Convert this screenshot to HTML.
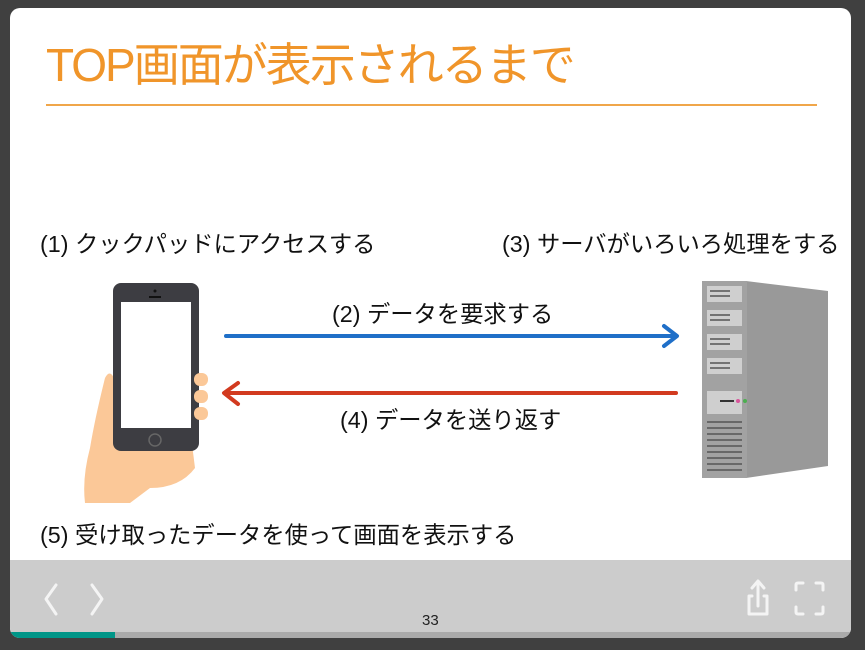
<!DOCTYPE html>
<html><head><meta charset="utf-8"><style>
*{margin:0;padding:0;box-sizing:border-box}
body{width:865px;height:650px;background:#404040;position:relative;overflow:hidden;font-family:"Liberation Sans","Noto Sans CJK JP",sans-serif}
#card{position:absolute;left:10px;top:8px;width:841px;height:630px;background:#fff;border-radius:10px;overflow:hidden}
.t{position:absolute;font-size:23.3px;color:#111;white-space:nowrap;line-height:1}
#bar{position:absolute;left:0;top:552px;width:841px;height:72px;background:#cccccc}
#prog{position:absolute;left:0;top:624px;width:841px;height:6px;background:#aaa}
#prog div{width:105px;height:6px;background:#009688}
</style></head><body>
<div id="card">
<div style="position:absolute;left:36px;top:34px;font-size:46px;color:#f0952a;letter-spacing:-2px;line-height:1">TOP画面が表示されるまで</div>
<div style="position:absolute;left:36px;top:96px;width:771px;height:2px;background:#f0a64a"></div>
<div class="t" style="left:30px;top:225px">(1) クックパッドにアクセスする</div>
<div class="t" style="left:492px;top:225px">(3) サーバがいろいろ処理をする</div>
<div class="t" style="left:322px;top:295px">(2) データを要求する</div>
<div class="t" style="left:330px;top:401px">(4) データを送り返す</div>
<div class="t" style="left:30px;top:516px">(5) 受け取ったデータを使って画面を表示する</div>
<svg style="position:absolute;left:0;top:0" width="841" height="552">
<g fill="none" stroke-linecap="round" stroke-linejoin="round" stroke-width="4">
<path d="M216 328 L666 328 M654 318 L667 328 L654 338" stroke="#1f6fc8"/>
<path d="M666 385 L216 385 M228 375 L214 385 L228 396" stroke="#d23a1f"/>
</g>
<path d="M95 370 Q100 360 105 372 L108 420 L180 420 L185 460 Q170 480 140 480 L120 495 L75 495 Q72 470 80 440 Q85 410 95 370Z" fill="#fbc898"/>
<rect x="103" y="275" width="86" height="168" rx="8" fill="#3d3d42"/>
<rect x="111" y="294" width="70" height="126" fill="#fff"/>
<circle cx="145" cy="432" r="6" fill="none" stroke="#666" stroke-width="1.5"/>
<rect x="139" y="288" width="12" height="2" fill="#111"/>
<circle cx="145" cy="283" r="1.5" fill="#111"/>
<rect x="184" y="365" width="14" height="13" rx="6" fill="#fbc898"/>
<rect x="184" y="382" width="14" height="13" rx="6" fill="#fbc898"/>
<rect x="184" y="399" width="14" height="13" rx="6" fill="#fbc898"/>
<path d="M736 273 L818 283 L818 458 L736 470Z" fill="#999"/>
<rect x="692" y="273" width="45" height="197" fill="#a2a2a2"/>
<g fill="#cfcfcf">
<rect x="697" y="278" width="35" height="16"/><rect x="697" y="302" width="35" height="16"/><rect x="697" y="326" width="35" height="16"/><rect x="697" y="350" width="35" height="16"/><rect x="697" y="383" width="35" height="23"/>
</g>
<g stroke="#555" stroke-width="1.5">
<path d="M700 283h20M700 288h20M700 307h20M700 312h20M700 331h20M700 336h20M700 355h20M700 360h20"/>
<path d="M697 414h35M697 420h35M697 426h35M697 432h35M697 438h35M697 444h35M697 450h35M697 456h35M697 462h35"/>
</g>
<rect x="710" y="392" width="14" height="2" fill="#333"/>
<circle cx="728" cy="393" r="2" fill="#d8559a"/><circle cx="735" cy="393" r="2" fill="#4caf50"/>
</svg>
<div id="bar">
<svg width="841" height="72" style="position:absolute;left:0;top:0" fill="none" stroke="#f4f4f4" stroke-width="3" stroke-linecap="round" stroke-linejoin="round">
<path d="M46 25 L36 39 L46 54"/><path d="M82 25 L92 39 L82 54"/>
<path d="M742 36 L739 36 L739 54 L757 54 L757 36 L754 36"/><path d="M748 46 L748 22 M742 28 L748 21 L754 28"/>
<path d="M786 30 V25 Q786 23 788 23 H793 M806 23 H811 Q813 23 813 25 V30 M813 47 V52 Q813 54 811 54 H806 M793 54 H788 Q786 54 786 52 V47"/>
</svg>
<div style="position:absolute;left:412px;top:52px;font-size:15px;color:#222">33</div>
</div>
<div id="prog"><div></div></div>
</div>
</body></html>
